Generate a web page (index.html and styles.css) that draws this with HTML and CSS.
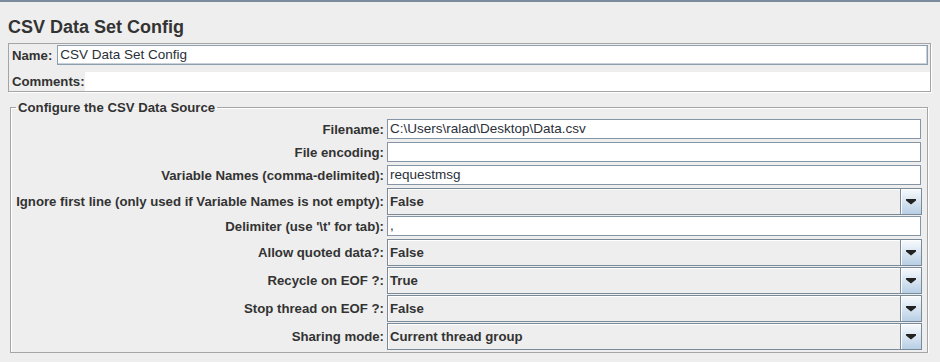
FILE: index.html
```html
<!DOCTYPE html>
<html>
<head>
<meta charset="utf-8">
<title>CSV Data Set Config</title>
<link rel="stylesheet" href="styles.css">
</head>
<body>
<div class="topbar"></div>
<h1 class="title">CSV Data Set Config</h1>
<div class="namebox">
  <div class="name-row"><span class="lbl">Name:</span><div class="tf name-tf">CSV Data Set Config</div></div>
  <div class="comments-row"><span class="lbl">Comments:</span><div class="ta"></div></div>
</div>
<fieldset class="group">
  <legend>Configure the CSV Data Source</legend>
  <div class="form">
    <div class="flbl">Filename:</div>
    <div class="tf">C:\Users\ralad\Desktop\Data.csv</div>

    <div class="flbl">File encoding:</div>
    <div class="tf"></div>

    <div class="flbl">Variable Names (comma-delimited):</div>
    <div class="tf">requestmsg</div>

    <div class="flbl c">Ignore first line (only used if Variable Names is not empty):</div>
    <div class="combo"><span class="val">False</span><span class="btn"><svg width="10" height="6" viewBox="0 0 10 6"><path d="M0 0H10V1.5L5 5.5L0 1.5Z" fill="#222"/></svg></span></div>

    <div class="flbl">Delimiter (use '\t' for tab):</div>
    <div class="tf">,</div>

    <div class="flbl c">Allow quoted data?:</div>
    <div class="combo"><span class="val">False</span><span class="btn"><svg width="10" height="6" viewBox="0 0 10 6"><path d="M0 0H10V1.5L5 5.5L0 1.5Z" fill="#222"/></svg></span></div>

    <div class="flbl c">Recycle on EOF ?:</div>
    <div class="combo"><span class="val">True</span><span class="btn"><svg width="10" height="6" viewBox="0 0 10 6"><path d="M0 0H10V1.5L5 5.5L0 1.5Z" fill="#222"/></svg></span></div>

    <div class="flbl c">Stop thread on EOF ?:</div>
    <div class="combo"><span class="val">False</span><span class="btn"><svg width="10" height="6" viewBox="0 0 10 6"><path d="M0 0H10V1.5L5 5.5L0 1.5Z" fill="#222"/></svg></span></div>

    <div class="flbl c">Sharing mode:</div>
    <div class="combo"><span class="val">Current thread group</span><span class="btn"><svg width="10" height="6" viewBox="0 0 10 6"><path d="M0 0H10V1.5L5 5.5L0 1.5Z" fill="#222"/></svg></span></div>
  </div>
</fieldset>
</body>
</html>
```

FILE: styles.css
```css
body {
  margin: 0;
  background: #eeeeee;
  font-family: "Liberation Sans", Arial, sans-serif;
  color: #333333;
}

.topbar {
  height: 2px;
  background: #7b8b9d;
}

.title {
  margin: 14px 0 5px 8px;
  font-size: 18px;
  line-height: 22px;
  font-weight: bold;
}

.namebox {
  margin: 0 9px 0 8px;
  height: 49px;
  box-sizing: border-box;
  border: 1px solid #a5a5a5;
  box-shadow: 1px 1px 0 #ffffff;
  padding: 1px 0 0 2px;
}

.name-row {
  display: flex;
  align-items: center;
  height: 20px;
}

.comments-row {
  display: flex;
  align-items: center;
  height: 19px;
  margin-top: 7px;
}

.lbl {
  font-weight: bold;
  font-size: 13.2px;
  padding-left: 1px;
}

.ta {
  flex: 1;
  align-self: stretch;
  background: #ffffff;
}

.tf {
  height: 20px;
  box-sizing: border-box;
  border: 1px solid #8595a6;
  background: #ffffff;
  font-size: 13.5px;
  line-height: 18px;
  padding-left: 2px;
  margin: 0 1px 2px 0;
  white-space: nowrap;
  overflow: hidden;
  color: #2a2f3a;
}

.name-tf {
  flex: 1;
  margin: 0 2px 0 5px;
  border-color: #8f9eae;
  box-shadow: inset -1px -1px 0 #c8d0da;
}

.group {
  margin: 8px 12px 0 10px;
  padding: 4px 5px 2px 5px;
  border: 1px solid #a5a5a5;
  box-shadow: 1px 1px 0 #ffffff, inset 1px 1px 0 #ffffff;
  min-width: 0;
}

.group legend {
  padding: 0 2px;
  font-weight: bold;
  font-size: 13.2px;
  line-height: 15px;
}

.form {
  display: grid;
  grid-template-columns: 368px 1fr;
  column-gap: 3px;
  row-gap: 1px;
  align-items: start;
}

.flbl {
  text-align: right;
  font-weight: bold;
  font-size: 13.2px;
  height: 20px;
  line-height: 21px;
  white-space: nowrap;
}

.flbl.c {
  height: 27px;
  line-height: 27px;
}

.combo {
  height: 27px;
  box-sizing: border-box;
  display: flex;
  border: 1px solid #7a8a99;
  background: #eeeeee;
  box-shadow: inset 1px 1px 0 #ffffff;
}

.combo .val {
  flex: 1;
  font-weight: bold;
  font-size: 13.2px;
  line-height: 25px;
  padding-left: 2px;
}

.combo .btn {
  width: 20px;
  border-left: 1px solid #7a8a99;
  background: linear-gradient(#f7fafd, #dce7f2 45%, #b8cfe5);
  box-shadow: inset 1px 1px 0 #ffffff;
  display: flex;
  align-items: center;
  justify-content: center;
}

.combo .btn svg {
  display: block;
}
```
